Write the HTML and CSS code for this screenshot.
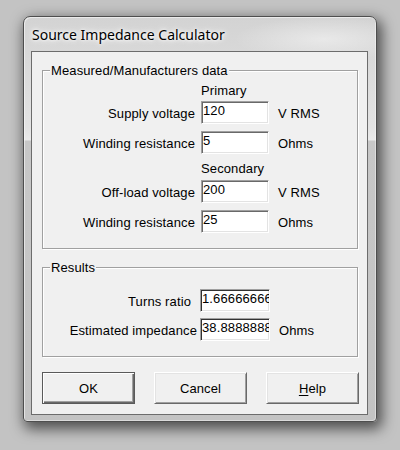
FILE: index.html
```html
<!DOCTYPE html>
<html>
<head>
<meta charset="utf-8">
<link rel="stylesheet" href="styles.css">
</head>
<body>
<div class="window">
  <div class="titlebar"><span class="title">Source Impedance Calculator</span></div>
  <div class="client">
    <div class="group group-data">
      <span class="legend">Measured/Manufacturers data</span>
      <div class="head head-primary">Primary</div>
      <div class="row row-1"><span class="label">Supply voltage</span><input class="field" value="120"><span class="unit">V RMS</span></div>
      <div class="row row-2"><span class="label">Winding resistance</span><input class="field" value="5"><span class="unit">Ohms</span></div>
      <div class="head head-secondary">Secondary</div>
      <div class="row row-3"><span class="label">Off-load voltage</span><input class="field" value="200"><span class="unit">V RMS</span></div>
      <div class="row row-4"><span class="label">Winding resistance</span><input class="field" value="25"><span class="unit">Ohms</span></div>
    </div>
    <div class="group group-results">
      <span class="legend">Results</span>
      <div class="row res-1"><span class="label label-turns">Turns ratio</span><input class="field field-ro" value="1.6666666666666667" readonly><span class="unit"></span></div>
      <div class="row res-2"><span class="label">Estimated impedance</span><input class="field field-ro" value="38.888888888888886" readonly><span class="unit">Ohms</span></div>
    </div>
    <div class="buttons">
      <button class="btn btn-default">OK</button>
      <button class="btn">Cancel</button>
      <button class="btn"><u>H</u>elp</button>
    </div>
  </div>
</div>
</body>
</html>
```
FILE: styles.css
```css
html, body {
  margin: 0;
  padding: 0;
}
body {
  width: 400px;
  height: 450px;
  overflow: hidden;
  background: #c3c3c3;
  font: 13px/15px "Liberation Sans", Arial, sans-serif;
  letter-spacing: 0.12px;
  color: #000;
}
.window {
  margin: 16px 0 0 23px;
  width: 354px;
  height: 406px;
  box-sizing: border-box;
  border: 1px solid #4e4e4e;
  border-radius: 7px 7px 4px 4px;
  padding: 0 8px 6px 7px;
  background:
    radial-gradient(ellipse 90px 22px at 300px 22px, rgba(255,255,255,.45), rgba(255,255,255,0)),
    linear-gradient(to bottom, #d3d3d3 0, #d9d9d9 40px, #e3e3e3 110px, #eaeaea 123px, #c7c7c7 124px, #c3c3c3 100%);
  box-shadow: 3px 5px 14px 2px rgba(0,0,0,.6), inset 1px 1px 0 rgba(255,255,255,.55), inset -1px -1px 0 rgba(255,255,255,.4);
}
.titlebar {
  height: 34px;
  display: flex;
  align-items: center;
  padding-left: 1px;
}
.title {
  font: 14px/18px "Noto Sans", "Open Sans", sans-serif;
  letter-spacing: 0;
  color: #000;
  text-shadow: 0 0 8px #fff, 0 0 5px #fff, 0 0 3px rgba(255,255,255,.8);
  position: relative;
  top: 1px;
}
.client {
  width: 337px;
  height: 364px;
  box-sizing: border-box;
  border: 1px solid #6c6c6c;
  background: #f0f0f0;
  padding: 0 0 0 10px;
  display: flex;
  flex-direction: column;
}
.group {
  position: relative;
  width: 316px;
  box-sizing: border-box;
  border: 1px solid #a0a0a0;
  box-shadow: inset 1px 1px 0 #fff, 1px 1px 0 #fff;
  margin-top: 18px;
  display: flex;
  flex-direction: column;
}
.group-data {
  height: 179px;
  padding-top: 12px;
}
.group-results {
  height: 90px;
  padding-top: 21px;
}
.legend {
  position: absolute;
  top: -8px;
  left: 7px;
  padding: 0 1px;
  background: #f0f0f0;
  line-height: 15px;
}
.head {
  height: 15px;
  padding-left: 158px;
}
.head-secondary { margin-top: 7px; }
.row {
  display: flex;
  align-items: center;
  height: 23px;
}
.row-1 { margin-top: 3px; }
.row-2 { margin-top: 7px; }
.row-3 { margin-top: 4px; }
.row-4 { margin-top: 7px; }
.res-2 { margin-top: 6px; }
.label {
  width: 152px;
  margin-right: 6px;
  text-align: right;
  white-space: nowrap;
  position: relative;
  top: 1px;
}
.group-results .label {
  width: 154px;
  margin-right: 3px;
}
.group-results .label-turns {
  width: 148px;
  margin-right: 9px;
}
.field {
  width: 68px;
  height: 23px;
  box-sizing: border-box;
  margin: 0;
  padding: 0 0 4px 1px;
  border: 1px solid;
  border-color: #a0a0a0 #fff #fff #a0a0a0;
  box-shadow: inset 1px 1px 0 #696969, inset -1px -1px 0 #e3e3e3;
  background: #fff;
  font: 13px/15px "Liberation Sans", Arial, sans-serif;
  letter-spacing: 0.12px;
  color: #000;
  outline: none;
}
.field-ro {
  width: 70px;
  box-shadow: inset 1px 1px 0 #333, inset -1px -1px 0 #e3e3e3;
}
.unit {
  margin-left: 9px;
  white-space: nowrap;
  position: relative;
  top: 1px;
}
.buttons {
  display: flex;
  gap: 19px;
  margin-top: 15px;
}
.btn {
  width: 93px;
  height: 32px;
  box-sizing: border-box;
  margin: 0;
  padding: 0;
  background: #f0f0f0;
  border: 1px solid;
  border-color: #fff #696969 #696969 #fff;
  box-shadow: inset 1px 1px 0 #e3e3e3, inset -1px -1px 0 #a0a0a0;
  font: 13px/15px "Liberation Sans", Arial, sans-serif;
  letter-spacing: 0.12px;
  color: #000;
}
.btn u {
  text-decoration: underline;
  text-underline-offset: 2px;
}
.btn-default {
  border: 1px solid #5a5a5a;
  box-shadow: inset 1px 1px 0 #fff, inset -1px -1px 0 #696969, inset -2px -2px 0 #a0a0a0;
}
```
